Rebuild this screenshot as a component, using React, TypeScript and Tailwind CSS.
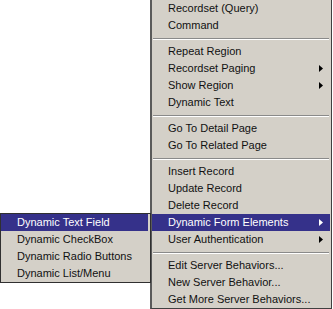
import React from 'react';

type Item = { label: string; sub?: boolean; active?: boolean } | 'sep';

const mainItems: Item[] = [
  { label: 'Recordset (Query)' },
  { label: 'Command' },
  'sep',
  { label: 'Repeat Region' },
  { label: 'Recordset Paging', sub: true },
  { label: 'Show Region', sub: true },
  { label: 'Dynamic Text' },
  'sep',
  { label: 'Go To Detail Page' },
  { label: 'Go To Related Page' },
  'sep',
  { label: 'Insert Record' },
  { label: 'Update Record' },
  { label: 'Delete Record' },
  { label: 'Dynamic Form Elements', sub: true, active: true },
  { label: 'User Authentication', sub: true },
  'sep',
  { label: 'Edit Server Behaviors...' },
  { label: 'New Server Behavior...' },
  { label: 'Get More Server Behaviors...' },
];

const subItems = ['Dynamic Text Field', 'Dynamic CheckBox', 'Dynamic Radio Buttons', 'Dynamic List/Menu'];

const Arrow = ({ white }: { white?: boolean }) => (
  <svg width="4" height="7" viewBox="0 0 4 7" className="shrink-0">
    <path d="M0 0 L4 3.5 L0 7 Z" fill={white ? '#ffffff' : '#000000'} />
  </svg>
);

const Row = ({ label, sub, active }: { label: string; sub?: boolean; active?: boolean }) => (
  <div
    className={`flex items-center h-[17px] pl-[16px] pr-[7px] whitespace-nowrap ${
      active ? 'bg-[#35318a] text-white' : 'text-[#111]'
    }`}
  >
    <span className="flex-1 leading-none">{label}</span>
    {sub && <Arrow white={active} />}
  </div>
);

const Separator = () => (
  <div className="h-[9px] flex flex-col justify-center px-[1px]">
    <div className="h-px bg-[#8a8a8a]" />
    <div className="h-px bg-white" />
  </div>
);

export default function App() {
  return (
    <div
      className="relative w-[333px] h-[309px] bg-white overflow-hidden text-[11px]"
      style={{ fontFamily: '"Liberation Sans", Arial, sans-serif' }}
    >
      {/* Server behaviors menu */}
      <div className="absolute left-[150px] top-0 w-[182px] h-[309px] bg-[#d4d0c8] border-l-2 border-l-[#5a5a5a] border-r border-r-[#404040] border-b border-b-[#404040] pr-[1px]">
        {mainItems.map((it, i) =>
          it === 'sep' ? <Separator key={i} /> : <Row key={i} {...it} />
        )}
      </div>

      {/* Dynamic Form Elements submenu */}
      <div className="absolute left-0 top-[213px] w-[151px] h-[70px] bg-[#d4d0c8] border border-[#303030] pr-[2px]">
        {subItems.map((s, i) => (
          <Row key={s} label={s} active={i === 0} />
        ))}
      </div>
    </div>
  );
}
